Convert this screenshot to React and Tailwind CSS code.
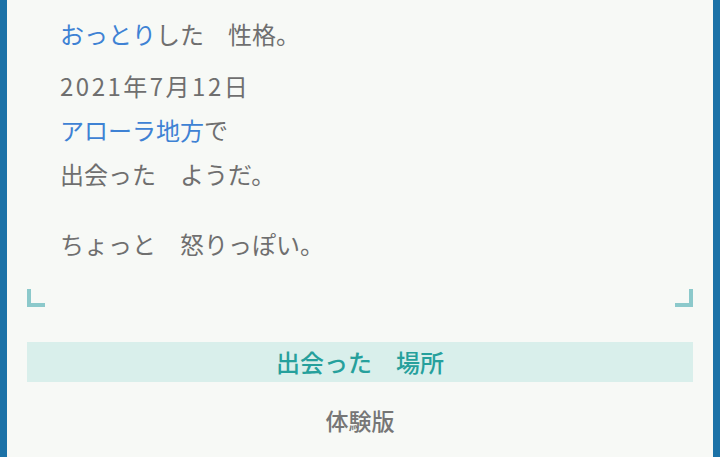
const Corner = ({ side }) => (
    <div className={`w-[18px] h-[18px] border-b-4 border-[#8cc9cb] ${side === "left" ? "border-l-4" : "border-r-4"}`}></div>
)

const App = () => {
    const font = { fontFamily: '"Noto Sans CJK JP", "Noto Sans", sans-serif' }

    return (
        <div className="w-[720px] h-[457px] overflow-hidden bg-[#f7f9f6] border-x-[7px] border-[#1b72a7]" style={font}>
            <div className="pl-[53px] pt-[12px] text-[24px] leading-[44px] text-[#6f6f6f]">
                <p>
                    <span className="text-[#3e82d4]">おっとり</span>した　性格。
                </p>
                <p className="mt-[8px] tracking-[2.5px]">2021年7月12日</p>
                <p>
                    <span className="text-[#3e82d4]">アローラ地方</span>で
                </p>
                <p>出会った　ようだ。</p>
                <p className="mt-[26px]">ちょっと　怒りっぽい。</p>
            </div>

            {/* corner brackets */}
            <div className="mt-[23px] px-[20px] flex justify-between items-end h-[18px]">
                <Corner side="left" />
                <Corner side="right" />
            </div>

            <div className="mt-[35px] mx-[20px] h-[40px] bg-[#d9efeb] flex items-center justify-center text-[24px] font-medium text-[#26a09c]">
                出会った　場所
            </div>

            <div className="mt-[20px] text-center text-[23px] leading-[36px] font-medium text-[#767676]">
                体験版
            </div>
        </div>
    )
}

export default App
